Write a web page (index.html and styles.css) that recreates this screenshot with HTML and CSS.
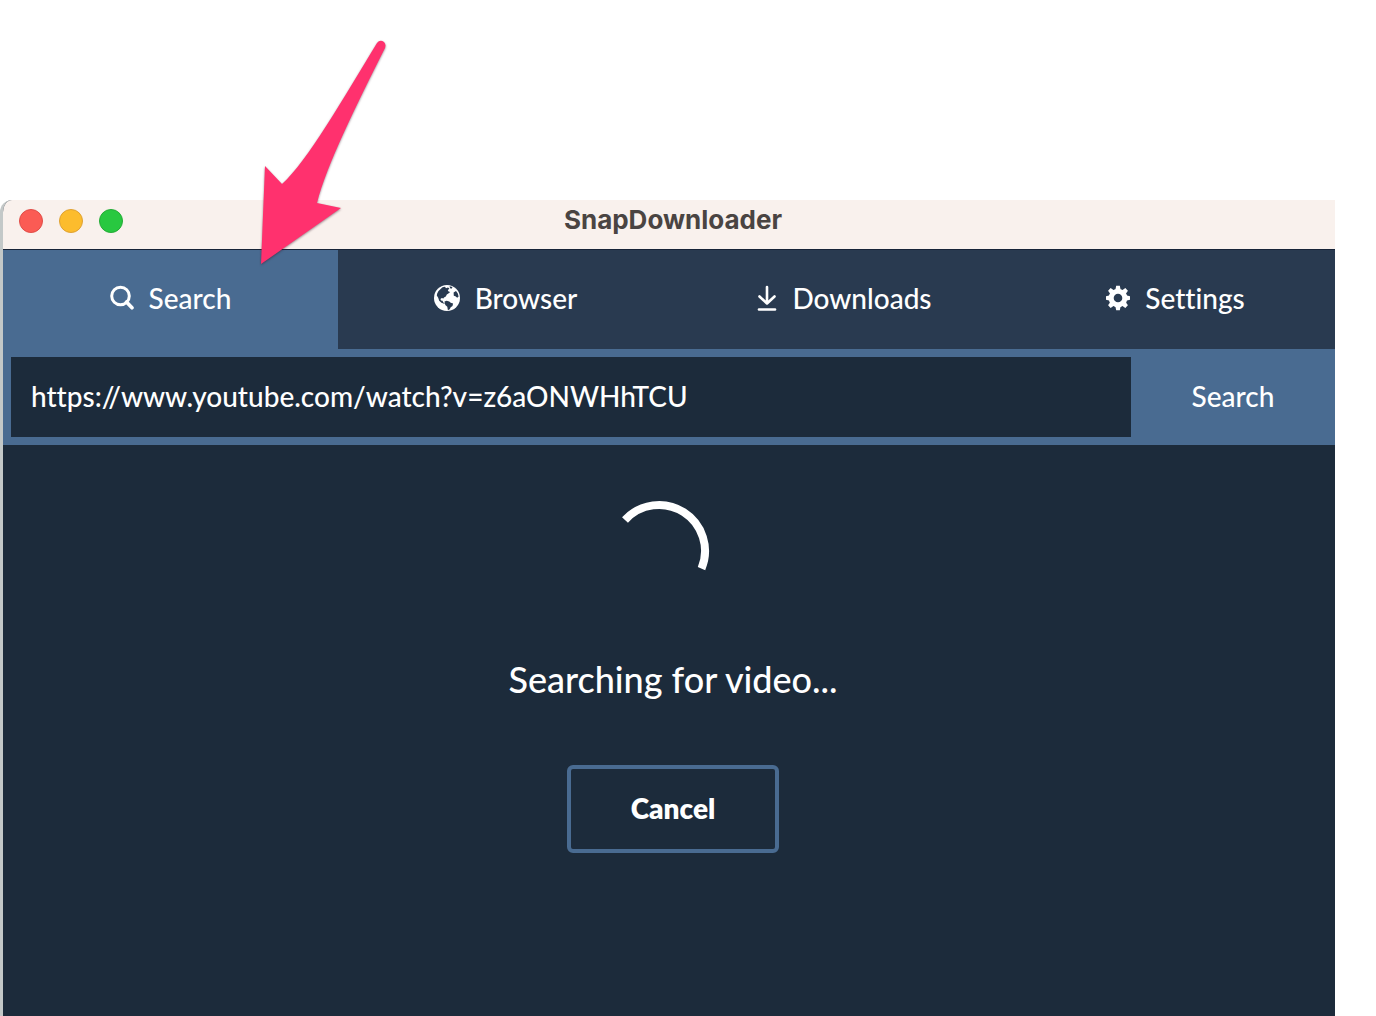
FILE: index.html
```html
<!DOCTYPE html>
<html lang="en">
<head>
<meta charset="utf-8">
<title>SnapDownloader</title>
<link rel="stylesheet" href="styles.css">
</head>
<body>
<div class="viewport">
  <main class="window">
    <header class="titlebar">
      <div class="lights">
        <button class="light light-close" aria-label="Close"></button>
        <button class="light light-minimize" aria-label="Minimize"></button>
        <button class="light light-zoom" aria-label="Zoom"></button>
      </div>
      <h1 class="title">SnapDownloader</h1>
    </header>
    <nav class="tabs">
      <a class="tab tab-active" href="#search">
        <svg class="icon" viewBox="0 0 24 28" width="24" height="28" fill="none" stroke="currentColor" aria-hidden="true"><circle cx="10.500" cy="12" r="8.800" stroke-width="3"/><path d="M16.500 18L22 23.800" stroke-width="3.600" stroke-linecap="round"/></svg>
        <span>Search</span>
      </a>
      <a class="tab" href="#browser">
        <svg class="icon" viewBox="0 0 26 28" width="26" height="28" aria-hidden="true"><circle cx="13" cy="14" r="13" fill="currentColor"/><path class="land" d="M4.500 7L8.500 3.300l2.500-.5 1 1.400 2-.8 1.400 1-1.600 1.800.8 1.400 1.600.4-1.800 1.600-1.600 1-1 2-1.800.8-.6 1.200-1.600-.6-1.400 1 .6 1.600 1.600.2.600 1.600 1.800.6-.8.8-2.800-1-2.200-2-1-3-1.400-2.200.4-2z"/><path class="land" d="M10.500 17.600l2.200-.8 2.600.6 1.400 1.400 2.400.8-.6 2.400-1.800 1.200-1 2-1.800 1-.6-3.400-2-1.800z"/><path class="land" d="M15.500 2.200l3 .8-1 1.800-1.400-.6zM19.600 8.400l2.400-1.400 1.800 2.400.8 3.200-1.400 1.200-1.800-1.600-1.600-.4z"/></svg>
        <span>Browser</span>
      </a>
      <a class="tab" href="#downloads">
        <svg class="icon" viewBox="0 0 28 28" width="28" height="28" fill="none" stroke="currentColor" stroke-width="2.600" stroke-linecap="round" stroke-linejoin="round" aria-hidden="true"><path d="M18 3v16M10.500 12.500l7.500 7 7.500-7"/><path d="M10 25.500h16"/></svg>
        <span>Downloads</span>
      </a>
      <a class="tab" href="#settings">
        <svg class="icon" viewBox="0 0 24 28" width="24" height="28" aria-hidden="true"><g fill="currentColor"><circle cx="12" cy="14" r="9.300"/><path id="tooth" d="M9.300 6L10.200 1.800h3.600L14.700 6v16l-.9 4.200h-3.600L9.300 22z"/><use href="#tooth" transform="rotate(45 12 14)"/><use href="#tooth" transform="rotate(90 12 14)"/><use href="#tooth" transform="rotate(135 12 14)"/></g><circle class="land" cx="12" cy="14" r="4.300"/></svg>
        <span>Settings</span>
      </a>
    </nav>
    <form class="searchbar">
      <input class="url" type="text" aria-label="Video URL" value="https://www.youtube.com/watch?v=z6aONWHhTCU">
      <button class="submit" type="button">Search</button>
    </form>
    <section class="content">
      <svg class="spinner" viewBox="0 0 128 104" width="128" height="104" fill="none" stroke="#fff" stroke-width="8" aria-hidden="true"><path d="M16 20A46 46 0 0 1 92.500 68.600"/></svg>
      <p class="status">Searching for video...</p>
      <button class="cancel" type="button">Cancel</button>
    </section>
  </main>
</div>
<svg class="arrow" viewBox="250 30 150 240" width="150" height="240" aria-hidden="true"><path d="M261 264L265 166L282 184C307 162 344 97 377 43Q380 39 384 42Q387 45 384 50C356 106 327 164 317 203L341 208Z"/></svg>
</body>
</html>
```
FILE: styles.css
```css
* {
  box-sizing: border-box;
}

body {
  margin: 0;
  min-height: 100vh;
  background: #fff;
  font-family: Lato, sans-serif;
  font-size: 28px;
  font-weight: 500;
  font-variant-ligatures: none;
  color: #fff;
}

button,
input {
  font: inherit;
  font-variant-ligatures: none;
  color: inherit;
  border: 0;
  margin: 0;
}

/* The app window runs slightly past the right edge of its viewport. */
.viewport {
  display: flex;
  min-height: 100vh;
  padding-top: 200px;
  margin-right: 41px;
  overflow: hidden;
}

.window {
  flex: none;
  width: calc(100% + 8px);
  display: flex;
  flex-direction: column;
  border-left: 3px solid #c3c8c8;
  border-top-left-radius: 12px;
  background: #1c2b3b;
  overflow: hidden;
}

.titlebar {
  display: grid;
  grid-template-columns: 1fr auto 1fr;
  align-items: center;
  height: 49px;
  padding: 0 16px 9px;
  background: #f9f1ed;
}

.lights {
  display: flex;
  gap: 16px;
}

.light {
  width: 24px;
  height: 24px;
  padding: 0;
  margin-top: 2px;
  border-radius: 50%;
}

.light-close {
  background: #fb5b54;
  border: 1px solid #df4d48;
}

.light-minimize {
  background: #fcbc2d;
  border: 1px solid #dea133;
}

.light-zoom {
  background: #28c840;
  border: 1px solid #25ab36;
}

.title {
  margin: 0;
  font: 700 26px/32px Inter, sans-serif;
  color: #4a4442;
}

.tabs {
  display: grid;
  grid-template-columns: repeat(4, 1fr);
  height: 100px;
  border-top: 1px solid #172438;
  background: #293a50;
}

.tab {
  display: flex;
  align-items: center;
  justify-content: center;
  gap: 15px;
  padding-bottom: 4px;
  color: inherit;
  text-decoration: none;
}

.tab-active {
  background: #496b91;
}

.land {
  fill: #293a50;
}

.searchbar {
  display: flex;
  padding: 8px;
  background: #496b91;
}

.url {
  flex: 1;
  min-width: 0;
  height: 80px;
  padding: 0 20px 2px;
  background: #1c2b3b;
}

.submit {
  width: 204px;
  padding-bottom: 4px;
  background: #496b91;
}

.content {
  flex: 1;
  display: flex;
  flex-direction: column;
  align-items: center;
  padding-top: 55px;
}

.status {
  margin: 51px 0 61px;
  font-size: 36px;
  line-height: 48px;
}

.cancel {
  width: 212px;
  height: 88px;
  margin-top: 1px;
  padding-bottom: 4px;
  border: 4px solid #496b91;
  border-radius: 6px;
  background: none;
  font-weight: 800;
}

/* Callout lying over the page, aimed at the Search tab. */
.arrow {
  position: absolute;
  left: 250px;
  top: 30px;
  fill: #ff316e;
  filter: drop-shadow(0 1px 1px rgba(60, 20, 40, 0.5));
  pointer-events: none;
}
```
